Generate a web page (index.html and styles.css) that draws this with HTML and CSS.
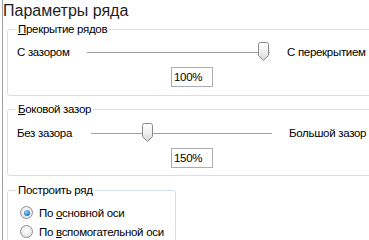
FILE: index.html
```html
<!DOCTYPE html>
<html lang="ru">
<head>
    <meta charset="UTF-8">
    <title>Параметры ряда</title>
    <link rel="stylesheet" href="styles.css">
</head>
<body>
    <div class="panel">
        <h1>Параметры ряда</h1>

        <fieldset class="group wide">
            <legend><u>П</u>рекрытие рядов</legend>
            <div class="slider-row">
                <span class="lbl lbl-overlap">С зазором</span>
                <div class="track track-overlap">
                    <span class="thumb thumb-overlap">
                        <svg width="11" height="19" viewBox="0 0 11 19">
                            <defs>
                                <linearGradient id="tg1" x1="0" y1="0" x2="0" y2="1">
                                    <stop offset="0" stop-color="#ffffff"/>
                                    <stop offset="0.55" stop-color="#f0f0f0"/>
                                    <stop offset="1" stop-color="#d4d4d4"/>
                                </linearGradient>
                            </defs>
                            <path d="M2.5 0.5 H8.5 Q10.5 0.5 10.5 2.5 V13.5 L5.5 18.5 L0.5 13.5 V2.5 Q0.5 0.5 2.5 0.5 Z" fill="url(#tg1)" stroke="#8a8a8a"/>
                        </svg>
                    </span>
                </div>
                <span class="lbl">С перекрытием</span>
            </div>
            <div class="value-box">100%</div>
        </fieldset>

        <fieldset class="group wide second">
            <legend><u>Б</u>оковой зазор</legend>
            <div class="slider-row">
                <span class="lbl lbl-gap">Без зазора</span>
                <div class="track track-gap">
                    <span class="thumb thumb-gap">
                        <svg width="11" height="19" viewBox="0 0 11 19">
                            <defs>
                                <linearGradient id="tg2" x1="0" y1="0" x2="0" y2="1">
                                    <stop offset="0" stop-color="#ffffff"/>
                                    <stop offset="0.55" stop-color="#f0f0f0"/>
                                    <stop offset="1" stop-color="#d4d4d4"/>
                                </linearGradient>
                            </defs>
                            <path d="M2.5 0.5 H8.5 Q10.5 0.5 10.5 2.5 V13.5 L5.5 18.5 L0.5 13.5 V2.5 Q0.5 0.5 2.5 0.5 Z" fill="url(#tg2)" stroke="#8a8a8a"/>
                        </svg>
                    </span>
                </div>
                <span class="lbl">Большой зазор</span>
            </div>
            <div class="value-box">150%</div>
        </fieldset>

        <fieldset class="group narrow">
            <legend>Построить ряд</legend>
            <label class="radio-row"><span class="radio checked"></span><span>По <u>о</u>сновной оси</span></label>
            <label class="radio-row"><span class="radio"></span><span>По <u>в</u>спомогательной оси</span></label>
        </fieldset>
    </div>
</body>
</html>
```

FILE: styles.css
```css
body {
    margin: 0;
    background: #ffffff;
    font-family: "Liberation Sans", Arial, sans-serif;
    font-size: 11.5px;
    letter-spacing: -0.3px;
    color: #000000;
    overflow: hidden;
    width: 369px;
    height: 240px;
}
.panel {
    margin-left: 2px;
    border-left: 1px solid #a0a0a0;
    padding-left: 4px;
    height: 240px;
}
h1 {
    margin: 0 0 0 -4px;
    height: 22px;
    font-size: 16px;
    font-weight: normal;
    letter-spacing: 0;
    line-height: 21px;
    color: #1e1e1e;
}
.group {
    margin: 0;
    padding: 0 0 0 9px;
    border: 1px solid #d5dfe5;
    border-radius: 3px;
}
.wide {
    width: 400px;
    padding-bottom: 8px;
}
.second {
    margin-top: 6px;
    padding-bottom: 7px;
}
.narrow {
    width: 158px;
    margin-top: 7px;
    padding-bottom: 4px;
}
legend {
    padding: 0 2px;
    margin-left: -1px;
    line-height: 14px;
}
.slider-row {
    display: flex;
    align-items: center;
    height: 20px;
    margin-top: 6px;
}
.second .slider-row {
    margin-top: 7px;
}
.lbl-overlap {
    width: 70px;
}
.lbl-gap {
    width: 74px;
}
.track {
    position: relative;
    height: 1px;
    background: #a0a0a0;
    margin-right: 17px;
}
.track-overlap {
    width: 183px;
}
.track-gap {
    width: 181px;
}
.thumb {
    position: absolute;
    top: -10px;
    line-height: 0;
}
.thumb-overlap {
    left: 171px;
}
.thumb-gap {
    left: 51px;
}
.value-box {
    width: 38px;
    height: 18px;
    margin: 5px 0 0 154px;
    border: 1px solid #abadb3;
    line-height: 18px;
    padding-left: 2px;
}
.radio-row {
    display: flex;
    align-items: center;
    height: 19px;
    margin-left: 3px;
}
.radio-row:first-of-type {
    margin-top: 6px;
}
.radio {
    width: 11px;
    height: 11px;
    border: 1px solid #8e8f8f;
    border-radius: 50%;
    margin-right: 6px;
    background: radial-gradient(circle at 50% 40%, #ffffff 0, #f2f2f2 40%, #d9d9d9 100%);
    display: flex;
    align-items: center;
    justify-content: center;
}
.radio.checked::after {
    content: "";
    width: 6px;
    height: 6px;
    border-radius: 50%;
    background: radial-gradient(circle at 40% 35%, #9fdcff 0, #2d8fd8 50%, #0e4f94 100%);
}
```
